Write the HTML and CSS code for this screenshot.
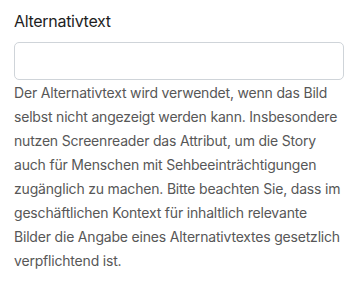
FILE: index.html
```html
<!DOCTYPE html>
<html lang="de">
<head>
<meta charset="utf-8">
<link rel="stylesheet" href="styles.css">
</head>
<body>
<div class="field">
  <label class="label" for="alt">Alternativtext</label>
  <input class="input" id="alt" type="text">
  <p class="help">Der Alternativtext wird verwendet, wenn das Bild selbst nicht angezeigt werden kann. Insbesondere nutzen Screenreader das Attribut, um die Story auch für Menschen mit Sehbeeinträchtigungen zugänglich zu machen. Bitte beachten Sie, dass im geschäftlichen Kontext für inhaltlich relevante Bilder die Angabe eines Alternativtextes gesetzlich verpflichtend ist.</p>
</div>
</body>
</html>
```
FILE: styles.css
```css
html, body {
  margin: 0;
  padding: 0;
  background: #fff;
}
body {
  font-family: Inter, "Noto Sans", sans-serif;
}
.field {
  display: flex;
  flex-direction: column;
  padding: 9px 13px 0 14px;
}
.label {
  font-size: 16px;
  line-height: 24px;
  letter-spacing: -0.3px;
  color: #1e1e1e;
  margin-bottom: 9px;
}
.input {
  box-sizing: border-box;
  height: 38px;
  width: 100%;
  margin: 0;
  border: 1px solid #cfd4d9;
  border-radius: 5px;
  background: #fff;
  padding: 0 10px;
  font: inherit;
}
.help {
  margin: 1px 0 0 0;
  font-size: 14px;
  line-height: 24px;
  letter-spacing: -0.19px;
  color: #575757;
}
```
